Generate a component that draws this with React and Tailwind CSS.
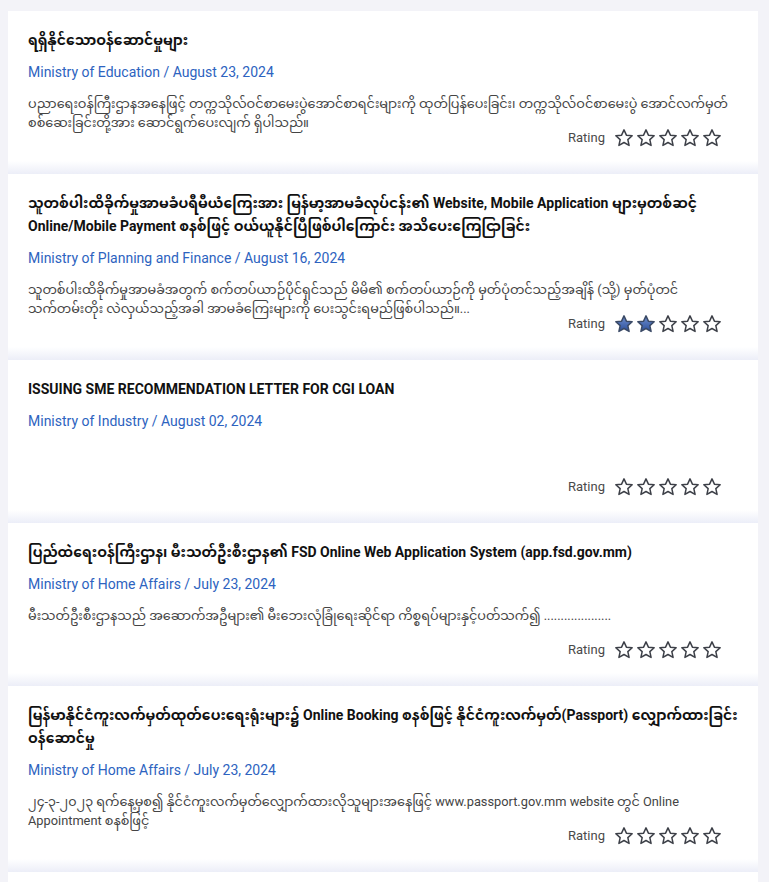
import React from 'react';

const services = [
  {
    title: 'ရရှိနိုင်သောဝန်ဆောင်မှုများ',
    ministry: 'Ministry of Education',
    date: 'August 23, 2024',
    body: 'ပညာရေးဝန်ကြီးဌာနအနေဖြင့် တက္ကသိုလ်ဝင်စာမေးပွဲအောင်စာရင်းများကို ထုတ်ပြန်ပေးခြင်း၊ တက္ကသိုလ်ဝင်စာမေးပွဲ အောင်လက်မှတ် စစ်ဆေးခြင်းတို့အား ဆောင်ရွက်ပေးလျက် ရှိပါသည်။',
    rating: 0,
  },
  {
    title: 'သူတစ်ပါးထိခိုက်မှုအာမခံပရီမီယံကြေးအား မြန်မာ့အာမခံလုပ်ငန်း၏ Website, Mobile Application များမှတစ်ဆင့် Online/Mobile Payment စနစ်ဖြင့် ဝယ်ယူနိုင်ပြီဖြစ်ပါကြောင်း အသိပေးကြေငြာခြင်း',
    ministry: 'Ministry of Planning and Finance',
    date: 'August 16, 2024',
    body: (
      <>
        သူတစ်ပါးထိခိုက်မှုအာမခံအတွက် စက်တပ်ယာဉ်ပိုင်ရှင်သည် မိမိ၏ စက်တပ်ယာဉ်ကို မှတ်ပုံတင်သည့်အချိန် (သို့) မှတ်ပုံတင်{' '}
        <span className="whitespace-nowrap">သက်တမ်းတိုး</span> လဲလှယ်သည့်အခါ အာမခံကြေးများကို ပေးသွင်းရမည်ဖြစ်ပါသည်။...
      </>
    ),
    rating: 2,
  },
  {
    title: 'ISSUING SME RECOMMENDATION LETTER FOR CGI LOAN',
    ministry: 'Ministry of Industry',
    date: 'August 02, 2024',
    body: '',
    rating: 0,
  },
  {
    title: 'ပြည်ထဲရေးဝန်ကြီးဌာန၊ မီးသတ်ဦးစီးဌာန၏ FSD Online Web Application System (app.fsd.gov.mm)',
    ministry: 'Ministry of Home Affairs',
    date: 'July 23, 2024',
    body: 'မီးသတ်ဦးစီးဌာနသည် အဆောက်အဦများ၏ မီးဘေးလုံခြုံရေးဆိုင်ရာ ကိစ္စရပ်များနှင့်ပတ်သက်၍ ....................',
    rating: 0,
  },
  {
    title: 'မြန်မာနိုင်ငံကူးလက်မှတ်ထုတ်ပေးရေးရုံးများ၌ Online Booking စနစ်ဖြင့် နိုင်ငံကူးလက်မှတ်(Passport) လျှောက်ထားခြင်း ဝန်ဆောင်မှု',
    ministry: 'Ministry of Home Affairs',
    date: 'July 23, 2024',
    body: '၂၄-၃-၂၀၂၃ ရက်နေ့မှစ၍ နိုင်ငံကူးလက်မှတ်လျှောက်ထားလိုသူများအနေဖြင့် www.passport.gov.mm website တွင် Online Appointment စနစ်ဖြင့်',
    rating: 0,
  },
  {
    title: 'ရရှိနိုင်သောဝန်ဆောင်မှုများ',
    ministry: 'Ministry of Education',
    date: 'July 10, 2024',
    body: '',
    rating: 0,
  },
];

const Star = ({ filled, id }) => (
  <svg width="20" height="20" viewBox="0 0 24 24" className="block">
    <defs>
      <linearGradient id={id} x1="0" y1="0" x2="0" y2="1">
        <stop offset="0%" stopColor="#6f8fd0" />
        <stop offset="100%" stopColor="#2c4f9a" />
      </linearGradient>
    </defs>
    <polygon
      points="12,2.2 14.9,8.6 21.8,9.3 16.6,14 18.1,20.9 12,17.4 5.9,20.9 7.4,14 2.2,9.3 9.1,8.6"
      fill={filled ? `url(#${id})` : '#ffffff'}
      stroke={filled ? '#3b4a66' : '#3d4048'}
      strokeWidth="1.8"
      strokeLinejoin="round"
    />
  </svg>
);

const ServiceCard = ({ item, index }) => (
  <div className="bg-white">
    <div className="px-5 pt-[18px] pb-[13px]">
      <h2 className="text-[14px] leading-[23px] font-bold text-[#111111]">{item.title}</h2>
      <p className="mt-[10px] text-[14px] leading-5 text-[#2d63c0]">
        {item.ministry} / {item.date}
      </p>
      <p className="mt-3 min-h-[38px] text-[12.8px] leading-[19px] text-[#444444]">{item.body}</p>
      <div className="-mt-1 flex items-center justify-end pr-4 h-5">
        <span className="mr-[9px] text-[13px] leading-5 text-[#4a4a4a]">Rating</span>
        <div className="flex items-center gap-[2px]">
          {[1, 2, 3, 4, 5].map(n => (
            <Star key={n} filled={n <= item.rating} id={`star-${index}-${n}`} />
          ))}
        </div>
      </div>
    </div>
    <div className="h-[13px] bg-gradient-to-b from-white to-[#eceef8]"></div>
  </div>
);

export default function App() {
  return (
    <div
      className="min-h-screen bg-[#f3f3f8] pt-[11px] pl-2 pr-[11px]"
      style={{ fontFamily: 'Roboto, "Noto Sans Myanmar", "Noto Sans", sans-serif' }}
    >
      <div className="flex flex-col">
        {services.map((item, i) => (
          <ServiceCard key={i} item={item} index={i} />
        ))}
      </div>
    </div>
  );
}
